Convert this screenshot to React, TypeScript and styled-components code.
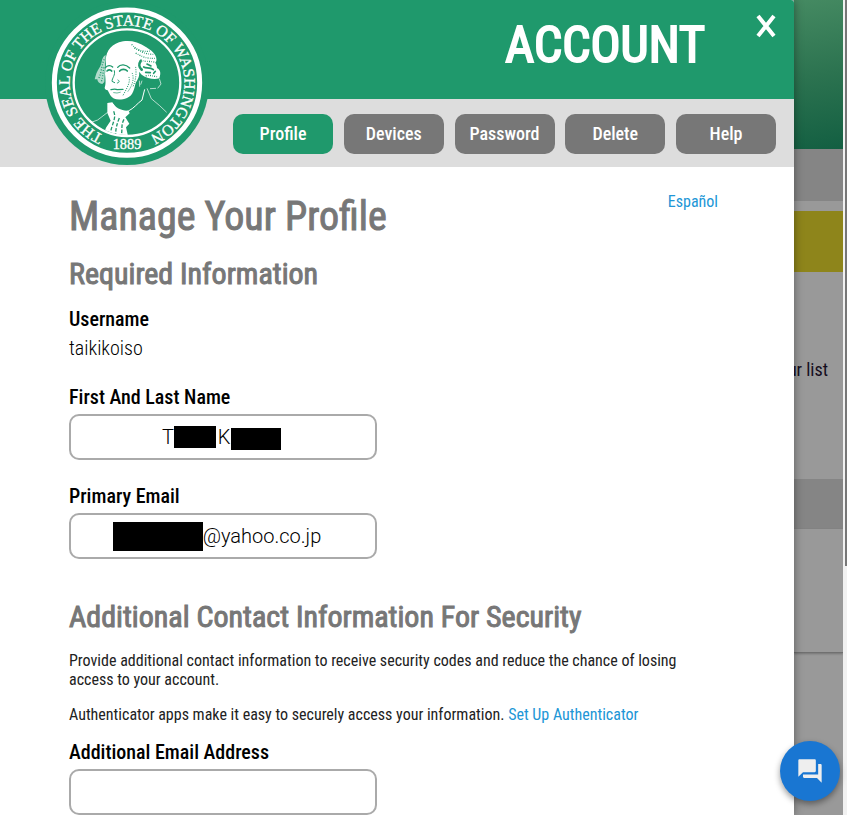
import React from "react";
import styled, { createGlobalStyle } from "styled-components";

const condensed = `"Roboto Condensed", "Liberation Sans Narrow", Roboto, sans-serif`;
const green = "#1f996c";
const grey = "#777777";

const GlobalStyle = createGlobalStyle`
  *, *::before, *::after { box-sizing: border-box; }
  body { margin: 0; background: #999999; font-family: ${condensed}; color: #000000; }
  h1, h2, h3, p { margin: 0; }
`;

const Screen = styled.div`
  display: flex;
  height: 100vh;
  overflow: hidden;
`;

const Drawer = styled.main`
  flex: 1;
  min-width: 0;
  overflow: hidden;
  background: #ffffff;
  border-top-right-radius: 3px;
`;

const DrawerShade = styled.div`
  position: relative;
  display: flex;
  flex: 1;
  min-width: 0;
  z-index: 1;
  box-shadow: 0 0 9px rgba(0, 0, 0, 0.4);
`;

const Header = styled.header`
  position: relative;
`;

const Banner = styled.div`
  display: flex;
  justify-content: flex-end;
  height: 99px;
  padding: 14px 16px 0 0;
  background: ${green};
`;

const BannerTitle = styled.h1`
  margin-right: 49px;
  color: #ffffff;
  font-size: 50px;
  line-height: 62px;
  font-weight: 400;
  -webkit-text-stroke: 2px currentColor;
`;

const CloseButton = styled.button`
  width: 24px;
  height: 24px;
  padding: 0;
  border: 0;
  background: none;
  cursor: pointer;

  svg { display: block; }
`;

const SealHolder = styled.div`
  position: absolute;
  top: 1px;
  left: 45px;
  line-height: 0;
`;

const Tabs = styled.nav`
  display: flex;
  justify-content: space-between;
  align-items: center;
  height: 68px;
  padding: 2px 18px 0 233px;
  background: #dddddd;
`;

const Tab = styled.button<{ $active?: boolean }>`
  width: 100px;
  height: 40px;
  padding: 0 0 2px;
  border: 0;
  border-radius: 10px;
  background: ${(p) => (p.$active ? green : grey)};
  color: #ffffff;
  font-family: ${condensed};
  font-size: 18px;
  font-weight: 500;
  cursor: pointer;
`;

const Content = styled.div`
  padding: 25px 76px 0 69px;
`;

const TitleRow = styled.div`
  display: flex;
  justify-content: space-between;
  align-items: flex-start;
`;

const PageTitle = styled.h2`
  color: ${grey};
  font-size: 40px;
  line-height: 50px;
  font-weight: 400;
  -webkit-text-stroke: 1px currentColor;
`;

const SectionTitle = styled.h3<{ $top: number }>`
  margin-top: ${(p) => p.$top}px;
  color: ${grey};
  font-size: 30px;
  line-height: 36px;
  font-weight: 400;
  -webkit-text-stroke: 1px currentColor;
`;

const Link = styled.a`
  color: #2196d6;
  font-size: 16px;
  line-height: 20px;
  text-decoration: none;
`;

const Field = styled.div<{ $top: number }>`
  margin-top: ${(p) => p.$top}px;
`;

const Label = styled.label`
  display: block;
  font-size: 20px;
  line-height: 24px;
  font-weight: 500;
`;

const FieldValue = styled.output`
  display: block;
  margin-top: 5px;
  font-size: 20px;
  line-height: 24px;
  font-weight: 300;
`;

const InputFrame = styled.div`
  position: relative;
  width: 308px;
  max-width: 100%;
  margin-top: 5px;
`;

const TextInput = styled.input`
  display: block;
  width: 100%;
  height: 46px;
  padding: 0 10px;
  border: 2px solid #aaaaaa;
  border-radius: 10px;
  background: #ffffff;
  color: #000000;
  font-family: Roboto, sans-serif;
  font-size: 20px;
  font-weight: 300;
  text-align: center;
`;

const Redaction = styled.span<{ $x: number; $y: number; $w: number; $h: number }>`
  position: absolute;
  left: ${(p) => p.$x}px;
  top: ${(p) => p.$y}px;
  width: ${(p) => p.$w}px;
  height: ${(p) => p.$h}px;
  background: #000000;
`;

const Note = styled.p<{ $top: number }>`
  margin-top: ${(p) => p.$top}px;
  font-size: 16px;
  line-height: 19px;
  font-weight: 400;
  color: #222222;
`;

const Backdrop = styled.aside`
  display: flex;
  flex-direction: column;
  width: 49px;
  overflow: hidden;
  background: #999999;
`;

const BackdropHero = styled.div`
  flex: none;
  height: 149px;
  background: linear-gradient(170deg, #458a62 0%, #2c7350 50%, #135f42 100%);
`;

const BackdropBand = styled.div<{ $color: string; $height: number; $top?: number }>`
  flex: none;
  height: ${(p) => p.$height}px;
  margin-top: ${(p) => p.$top ?? 0}px;
  background: ${(p) => p.$color};
`;

const BackdropText = styled.p`
  display: flex;
  justify-content: flex-end;
  height: 207px;
  flex: none;
  padding: 87px 15px 0 0;
  color: #140c1c;
  font-size: 18px;
  line-height: 22px;
  white-space: nowrap;
`;

const BackdropCard = styled.div`
  flex: none;
  height: 124px;
  border-bottom: 1px solid #707070;
  box-shadow: 0 1px 2px rgba(0, 0, 0, 0.25);
`;

const ScrollTrack = styled.div`
  width: 4px;
  padding-left: 2px;
  background: #f1f1f1;
`;

const ScrollThumb = styled.div`
  height: 566px;
  background: #777777;
`;

const ChatButton = styled.button`
  position: fixed;
  right: 7px;
  bottom: 14px;
  z-index: 2;
  display: flex;
  align-items: center;
  justify-content: center;
  width: 60px;
  height: 60px;
  padding: 0;
  border: 0;
  border-radius: 50%;
  background: #1976d2;
  box-shadow: 0 3px 6px rgba(0, 0, 0, 0.4);
  cursor: pointer;
`;

function StateSeal() {
  return (
    <svg width="164" height="164" viewBox="16 1 492 492" role="img" aria-label="The Seal of the State of Washington 1889">
      <defs>
        <path id="legend" d="M192 404 A172 172 0 1 1 332 404" />
        <clipPath id="medallion"><circle cx="262" cy="246" r="157" /></clipPath>
      </defs>
      <circle cx="262" cy="247" r="246" fill={green} />
      <circle cx="262" cy="246" r="218" fill="none" stroke="#fff" strokeWidth="15" />
      <circle cx="262" cy="246" r="160" fill="none" stroke="#fff" strokeWidth="7" />
      <g fill="#fff" stroke="#fff" strokeWidth="1" fontFamily='"Liberation Serif", serif' fontSize="47">
        <text textAnchor="middle">
          <textPath href="#legend" startOffset="50%">THE SEAL OF THE STATE OF WASHINGTON</textPath>
        </text>
        <text x="262" y="444" fontSize="43" textAnchor="middle">1889</text>
      </g>
      <g clipPath="url(#medallion)">
        <path fill="#fff" d="M199 190 C195 158 210 135 238 125 C262 117 292 120 320 140 C342 153 353 168 350 181 C344 187 353 193 352 202 C366 210 362 222 359 233 C344 238 323 234 306 222 L298 213 C301 226 294 236 288 247 C283 266 281 284 262 292 C240 301 219 297 212 284 L204 269 C199 268 195 266 195 261 C199 252 198 236 196 220 Z" />
        <path fill="#fff" opacity="0.65" d="M198 163 C184 171 189 184 181 198 C171 212 168 224 165 236 L173 236 C173 244 180 249 188 250 L194 244 L196 200 Z" />
        <path fill="none" stroke={green} strokeWidth="4" strokeDasharray="3 5" d="M194 176 C184 194 188 211 176 236 M193 200 C189 220 190 230 184 246" />
        <g fill="none" stroke={green} strokeWidth="4" strokeDasharray="3 4 2 4">
          <path d="M276 131 C292 151 313 154 333 151" />
          <path d="M284 142 C302 151 316 162 345 161" />
          <path d="M288 157 C309 170 323 174 348 173" />
          <path d="M303 177 C315 186 331 179 349 186" />
          <path d="M318 226 C334 221 342 229 356 228" />
        </g>
        <g fill="none" stroke={green} strokeLinecap="round">
          <path strokeWidth="8" d="M303 181 C297 190 298 201 306 207" />
          <path strokeWidth="5" d="M312 199 C320 204 331 198 341 207 M322 190 L334 196 M318 215 L332 216 M342 218 L347 212" />
          <path strokeWidth="4" d="M197 201 C203 193 213 193 219 199 M234 200 C242 190 258 190 270 202" />
          <path strokeWidth="5" d="M202 211 C207 206 213 207 216 211 M240 211 C246 204 257 205 263 211" />
          <path strokeWidth="3" d="M224 210 C228 224 217 232 217 242 L225 246 M235 238 C241 241 239 246 233 247" />
          <path strokeWidth="4" d="M214 267 Q226 264 233 267 L250 266" />
          <path strokeWidth="2" d="M222 276 Q232 279 242 275" />
          <path strokeWidth="3" strokeDasharray="1 6" d="M278 218 C284 236 278 256 262 276 M268 230 C272 244 264 259 250 284 M288 200 C290 216 290 234 280 258" />
        </g>
        <path fill="#fff" d="M203 307 L218 305 C227 322 247 332 267 330 L270 338 L257 350 L269 369 L259 380 L266 410 L193 398 L199 381 L213 360 L203 337 Z" />
        <g fill="none" stroke={green} strokeWidth="4" strokeDasharray="11 5">
          <path d="M222 332 C231 352 217 369 213 394 M239 352 C232 370 228 382 228 402 M253 356 C243 374 249 385 245 403" />
        </g>
        <g fill="none" stroke="#fff" strokeWidth="3">
          <path strokeWidth="2" d="M204 335 L174 358 L138 371" />
          <path d="M220 310 C229 329 243 338 266 331 C283 323 292 309 307 298 L315 266" />
          <path strokeWidth="2" d="M322 263 L335 294 L360 315 L381 335 M359 234 L364 250 L354 263 M331 264 L349 263 M299 240 L300 258 M307 240 L303 252" />
        </g>
      </g>
    </svg>
  );
}

const tabs = ["Profile", "Devices", "Password", "Delete", "Help"];
const blank = (count: number) => "\u00a0".repeat(count);

export default function App() {
  return (
    <Screen>
      <GlobalStyle />
      <DrawerShade>
        <Drawer>
          <Header>
            <Banner>
              <BannerTitle>ACCOUNT</BannerTitle>
              <CloseButton aria-label="Close">
                <svg width="24" height="24" viewBox="0 0 24 24" fill="none" stroke="#fff" strokeWidth="4">
                  <path d="M4 2 L20 22 M20 2 L4 22" />
                </svg>
              </CloseButton>
            </Banner>
            <Tabs>
              {tabs.map((name, i) => (
                <Tab key={name} $active={i === 0}>{name}</Tab>
              ))}
            </Tabs>
            <SealHolder><StateSeal /></SealHolder>
          </Header>
          <Content>
            <TitleRow>
              <PageTitle>Manage Your Profile</PageTitle>
              <Link href="#es">Español</Link>
            </TitleRow>
            <SectionTitle $top={14}>Required Information</SectionTitle>
            <Field $top={15}>
              <Label htmlFor="username">Username</Label>
              <FieldValue id="username">taikikoiso</FieldValue>
            </Field>
            <Field $top={25}>
              <Label htmlFor="name">First And Last Name</Label>
              <InputFrame>
                <TextInput id="name" defaultValue={`T${blank(9)}K${blank(11)}`} />
                <Redaction $x={105} $y={12} $w={42} $h={22} />
                <Redaction $x={162} $y={14} $w={50} $h={22} />
              </InputFrame>
            </Field>
            <Field $top={24}>
              <Label htmlFor="email">Primary Email</Label>
              <InputFrame>
                <TextInput id="email" defaultValue={`${blank(16)}@yahoo.co.jp`} />
                <Redaction $x={44} $y={9} $w={90} $h={29} />
              </InputFrame>
            </Field>
            <SectionTitle $top={40}>Additional Contact Information For Security</SectionTitle>
            <Note $top={16}>
              Provide additional contact information to receive security codes and reduce the chance of losing access to your account.
            </Note>
            <Note $top={16}>
              Authenticator apps make it easy to securely access your information.{" "}
              <Link href="#authenticator">Set Up Authenticator</Link>
            </Note>
            <Field $top={15}>
              <Label htmlFor="extra-email">Additional Email Address</Label>
              <InputFrame>
                <TextInput id="extra-email" />
              </InputFrame>
            </Field>
          </Content>
        </Drawer>
      </DrawerShade>
      <Backdrop>
        <BackdropHero />
        <BackdropBand $color="#858585" $height={52} />
        <BackdropBand $color="#8e851b" $height={61} $top={10} />
        <BackdropText>ur list</BackdropText>
        <BackdropBand $color="#858585" $height={50} />
        <BackdropCard />
      </Backdrop>
      <ScrollTrack><ScrollThumb /></ScrollTrack>
      <ChatButton aria-label="Chat">
        <svg width="28" height="28" viewBox="0 0 24 24" fill="#eeeeee">
          <path d="M21 6h-2v9H6v2c0 .55.45 1 1 1h11l4 4V7c0-.55-.45-1-1-1zm-4 6V3c0-.55-.45-1-1-1H3c-.55 0-1 .45-1 1v14l4-4h10c.55 0 1-.45 1-1z" />
        </svg>
      </ChatButton>
    </Screen>
  );
}
